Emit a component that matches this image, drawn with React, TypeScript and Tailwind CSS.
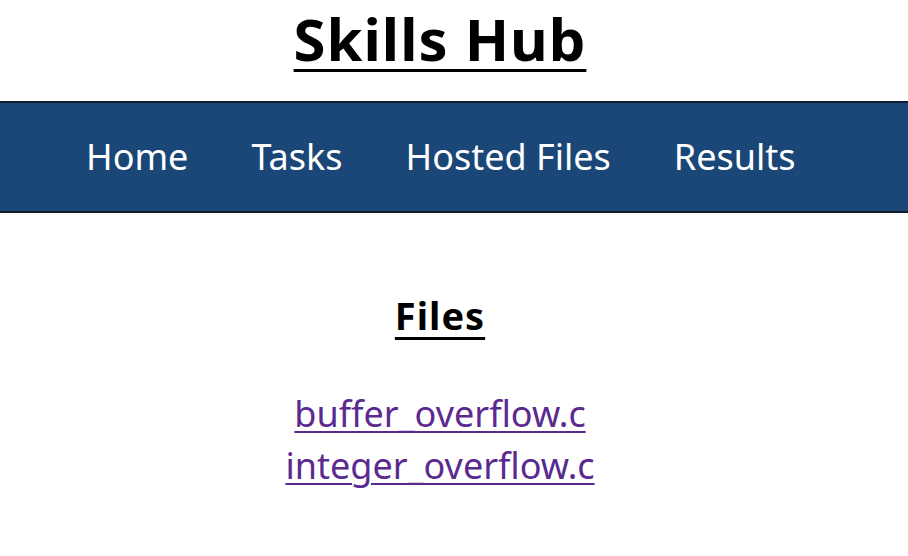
export default function App() {
  return (
    <div className="min-h-[556px] bg-white" style={{ fontFamily: '"Noto Sans", "Open Sans", sans-serif' }}>
      <div className="w-[880px] h-[101px] flex justify-center">
        <h1 className="mt-[10px] h-[58px] text-[58px] leading-none font-bold tracking-[1px] underline text-black decoration-[3px] underline-offset-[8px]">
          Skills Hub
        </h1>
      </div>
      <nav className="bg-[#1a4778] border-y-2 border-[#0f1c2c] h-[112px] flex items-center pl-[86px] gap-[63px] text-white text-[36px] leading-none">
        <a>Home</a>
        <a>Tasks</a>
        <a>Hosted Files</a>
        <a>Results</a>
      </nav>
      <div className="w-[880px] flex flex-col items-center pt-[83px]">
        <h2 className="text-[38px] leading-none font-bold tracking-[1px] underline text-black decoration-[3px] underline-offset-[7px]">
          Files
        </h2>
        <div className="flex flex-col items-center mt-[54px] text-[36px] leading-[52px] text-[#5a2a8f]">
          <a className="underline decoration-2 underline-offset-[4px]">buffer_overflow.c</a>
          <a className="underline decoration-2 underline-offset-[4px]">integer_overflow.c</a>
        </div>
      </div>
    </div>
  );
}
